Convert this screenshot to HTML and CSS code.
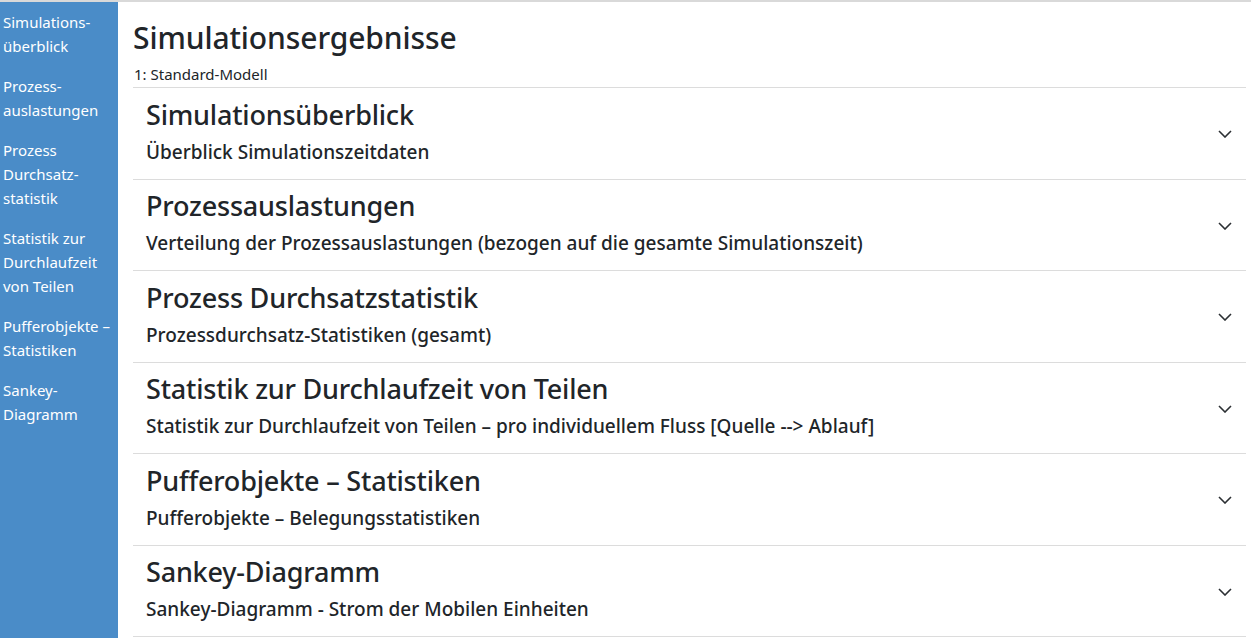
FILE: index.html
```html
<!DOCTYPE html>
<html lang="de">
<head>
<meta charset="utf-8">
<title>Simulationsergebnisse</title>
<link rel="stylesheet" href="styles.css">
</head>
<body>
<div class="topline"></div>
<div class="layout">
  <nav class="sidebar">
    <a class="nav-link" href="#a">Simulations-<br>überblick</a>
    <a class="nav-link" href="#b">Prozess-<br>auslastungen</a>
    <a class="nav-link" href="#c">Prozess<br>Durchsatz-<br>statistik</a>
    <a class="nav-link" href="#d">Statistik zur<br>Durchlaufzeit<br>von Teilen</a>
    <a class="nav-link" href="#e">Pufferobjekte –<br>Statistiken</a>
    <a class="nav-link" href="#f">Sankey-<br>Diagramm</a>
  </nav>
  <main class="main">
    <h1 class="title">Simulationsergebnisse</h1>
    <div class="model">1: Standard-Modell</div>
    <div class="accordion">
      <div class="item" id="a">
        <div class="item-text">
          <h2 class="item-title">Simulationsüberblick</h2>
          <div class="item-sub">Überblick Simulationszeitdaten</div>
        </div>
        <svg class="chevron" viewBox="0 0 14 8" width="14" height="8"><path d="M1 1 L7 7 L13 1" fill="none" stroke="#2b2f33" stroke-width="1.6"/></svg>
      </div>
      <div class="item" id="b">
        <div class="item-text">
          <h2 class="item-title">Prozessauslastungen</h2>
          <div class="item-sub">Verteilung der Prozessauslastungen (bezogen auf die gesamte Simulationszeit)</div>
        </div>
        <svg class="chevron" viewBox="0 0 14 8" width="14" height="8"><path d="M1 1 L7 7 L13 1" fill="none" stroke="#2b2f33" stroke-width="1.6"/></svg>
      </div>
      <div class="item" id="c">
        <div class="item-text">
          <h2 class="item-title">Prozess Durchsatzstatistik</h2>
          <div class="item-sub">Prozessdurchsatz-Statistiken (gesamt)</div>
        </div>
        <svg class="chevron" viewBox="0 0 14 8" width="14" height="8"><path d="M1 1 L7 7 L13 1" fill="none" stroke="#2b2f33" stroke-width="1.6"/></svg>
      </div>
      <div class="item" id="d">
        <div class="item-text">
          <h2 class="item-title">Statistik zur Durchlaufzeit von Teilen</h2>
          <div class="item-sub">Statistik zur Durchlaufzeit von Teilen – pro individuellem Fluss [Quelle --&gt; Ablauf]</div>
        </div>
        <svg class="chevron" viewBox="0 0 14 8" width="14" height="8"><path d="M1 1 L7 7 L13 1" fill="none" stroke="#2b2f33" stroke-width="1.6"/></svg>
      </div>
      <div class="item" id="e">
        <div class="item-text">
          <h2 class="item-title">Pufferobjekte – Statistiken</h2>
          <div class="item-sub">Pufferobjekte – Belegungsstatistiken</div>
        </div>
        <svg class="chevron" viewBox="0 0 14 8" width="14" height="8"><path d="M1 1 L7 7 L13 1" fill="none" stroke="#2b2f33" stroke-width="1.6"/></svg>
      </div>
      <div class="item" id="f">
        <div class="item-text">
          <h2 class="item-title">Sankey-Diagramm</h2>
          <div class="item-sub">Sankey-Diagramm - Strom der Mobilen Einheiten</div>
        </div>
        <svg class="chevron" viewBox="0 0 14 8" width="14" height="8"><path d="M1 1 L7 7 L13 1" fill="none" stroke="#2b2f33" stroke-width="1.6"/></svg>
      </div>
    </div>
  </main>
</div>
</body>
</html>
```

FILE: styles.css
```css
html, body {
  margin: 0;
  padding: 0;
  height: 100%;
  overflow: hidden;
}
body {
  font-family: "Noto Sans", "Open Sans", sans-serif;
  color: #212529;
  background: #fff;
}
.topline {
  height: 2px;
  background: #d9d9d9;
}
.layout {
  display: flex;
  height: calc(100% - 2px);
}
.sidebar {
  width: 118px;
  flex: 0 0 118px;
  background: #4a8cc8;
  padding: 8px 0 0 3px;
  box-sizing: border-box;
  display: flex;
  flex-direction: column;
  gap: 16px;
}
.nav-link {
  color: #fff;
  text-decoration: none;
  font-size: 15px;
  line-height: 24px;
}
.main {
  flex: 1;
  padding: 0 5px 0 15px;
}
.title {
  margin: 16px 0 0 0;
  font-size: 30px;
  font-weight: 500;
  line-height: 40px;
  letter-spacing: -0.1px;
}
.model {
  font-size: 15px;
  line-height: 20px;
  margin-top: 6px;
  padding-left: 1px;
  padding-bottom: 3px;
}
.accordion {
  border-top: 1px solid #dcdcdc;
}
.item {
  display: flex;
  align-items: center;
  justify-content: space-between;
  height: 91.5px;
  box-sizing: border-box;
  border-bottom: 1px solid #dcdcdc;
  padding: 0 14px 4px 13px;
}
.item-title {
  margin: 0;
  font-size: 27px;
  font-weight: 500;
  line-height: 34px;
  letter-spacing: -0.2px;
}
.item-sub {
  font-size: 19px;
  font-weight: 500;
  line-height: 26px;
  margin-top: 7px;
}
.chevron {
  display: block;
  flex: 0 0 auto;
  margin-top: 6px;
}
```
